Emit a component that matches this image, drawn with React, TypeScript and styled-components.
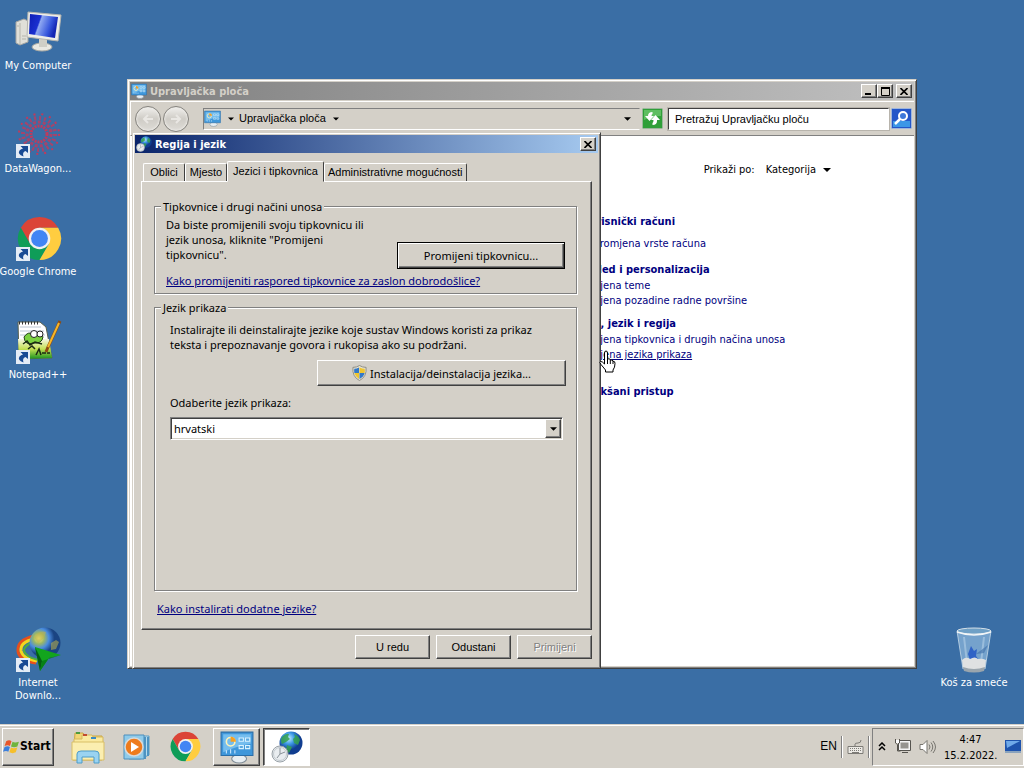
import React from 'react';
import styled, { createGlobalStyle, css } from 'styled-components';

const tahoma = '"DejaVu Sans Condensed", "DejaVu Sans", sans-serif';
const shell = '"Liberation Sans", Arial, sans-serif';
const segoe = '"Noto Sans", "Open Sans", sans-serif';
const face = '#d4d0c8';
const navy = '#000080';

const GlobalStyle = createGlobalStyle`
  * { box-sizing: border-box; }
  body { margin: 0; background: #3a6ea5; color: #000; font: 11px/15px ${tahoma}; }
  button, input, select { font: inherit; color: inherit; margin: 0; border-radius: 0; }
  p, h2 { margin: 0; }
  svg { display: block; flex: none; }
`;

const raised = css`
  background: ${face};
  border: 1px solid;
  border-color: #fff #404040 #404040 #fff;
  box-shadow: inset -1px -1px #808080;
`;

const Desktop = styled.div`
  display: flex;
  flex-direction: column;
  min-height: 100vh;
`;

const Workspace = styled.main`
  position: relative;
  flex: 1;
  min-height: 640px;
`;

const Shortcut = styled.button<{ $top: number; $right?: boolean }>`
  position: absolute;
  top: ${p => p.$top}px;
  ${p => (p.$right ? 'right: 10px;' : 'left: -2px;')}
  width: 80px;
  padding: 0;
  border: 0;
  background: none;
  color: #fff;
  display: flex;
  flex-direction: column;
  align-items: center;
  gap: 1px;
  line-height: 13px;
  text-align: center;
`;

const Glyph = styled.span`
  position: relative;
  display: grid;
  justify-items: end;
  align-items: start;
  width: 48px;
  height: 48px;
`;

const ShortcutBadge = styled.span`
  position: absolute;
  left: 2px;
  bottom: 3px;
`;

const WindowFrame = styled.section`
  position: absolute;
  display: flex;
  flex-direction: column;
  padding: 2px;
  background: ${face};
  border: 1px solid;
  border-color: ${face} #404040 #404040 ${face};
  box-shadow: inset 1px 1px #fff, inset -1px -1px #808080;
`;

const ControlPanel = styled(WindowFrame)`
  left: 127px;
  right: 107px;
  top: 79px;
  bottom: 55px;
`;

const RegionDialog = styled(WindowFrame)`
  left: 132px;
  width: 469px;
  top: 132px;
  bottom: 55px;
`;

const TitleBar = styled.header<{ $active?: boolean }>`
  display: flex;
  align-items: center;
  gap: 3px;
  height: 18px;
  padding: 0 2px 0 1px;
  color: ${p => (p.$active ? '#fff' : face)};
  background: ${p => p.$active
    ? 'linear-gradient(90deg, #0a246a, #a6caf0)'
    : 'linear-gradient(90deg, #808080, #c0c0c0)'};
`;

const Title = styled.h2`
  flex: 1;
  font-size: 11px;
  line-height: 15px;
`;

const CaptionGroup = styled.div`
  display: flex;
`;

const CaptionButton = styled.button`
  ${raised}
  display: grid;
  place-items: center;
  width: 16px;
  height: 14px;
  padding: 0;
`;

const Toolbar = styled.div`
  display: flex;
  align-items: center;
  height: 35px;
  margin-top: 1px;
  padding: 0 2px 0 4px;
  border-top: 1px solid #fff;
  border-left: 1px solid #fff;
  border-bottom: 1px solid #808080;
`;

const RoundButton = styled.button`
  display: grid;
  place-items: center;
  width: 26px;
  height: 26px;
  margin-right: 2px;
  padding: 0;
  border: 1px solid #85837e;
  border-radius: 50%;
  background: linear-gradient(#f0efec, #cfccc6 50%, #dedcd7);
  box-shadow: inset 0 0 2px 1px #eceae6;
`;

const AddressBar = styled.div`
  display: flex;
  align-items: center;
  gap: 5px;
  flex: 1;
  height: 22px;
  margin: 0 2px 0 12px;
  padding-right: 8px;
  border: 1px solid;
  border-color: #808080 ${face} #fff #808080;
  font-family: ${shell};
`;

const Crumb = styled.button`
  display: flex;
  align-items: center;
  gap: 7px;
  padding: 0;
  border: 0;
  background: none;
  &:last-child { margin-left: auto; }
`;

const SquareButton = styled.button`
  width: 21px;
  height: 22px;
  padding: 0;
  border: 0;
  background: none;
`;

const SearchInput = styled.input`
  width: 221px;
  height: 22px;
  margin: 0 2px 0 5px;
  padding: 0 6px;
  border: 1px solid;
  border-color: #404040 #fff #fff #404040;
  outline: 1px solid #b8b4ac;
  background: #fff;
  font-family: ${shell};
  &::placeholder { color: #000; opacity: 1; }
`;

const Content = styled.div`
  flex: 1;
  padding: 26px 83px 0 445px;
  background: #fff;
  overflow: hidden;
`;

const ViewBy = styled.div`
  display: flex;
  align-items: center;
  justify-content: flex-end;
  gap: 11px;
  margin-bottom: 37px;
`;

const DropButton = styled.button`
  display: flex;
  align-items: center;
  gap: 7px;
  padding: 0;
  border: 0;
  background: none;
`;

const Category = styled.section<{ $gap: number }>`
  display: flex;
  flex-direction: column;
  align-items: flex-start;
  margin-bottom: ${p => p.$gap}px;
  white-space: nowrap;
`;

const CategoryLink = styled.a`
  margin-left: 7px;
  color: ${navy};
  font-weight: bold;
  line-height: 16px;
  text-decoration: none;
`;

const TaskLink = styled.a<{ $hover?: boolean; $inset?: boolean }>`
  color: ${navy};
  text-decoration: ${p => (p.$hover ? 'underline' : 'none')};
  margin: ${p => (p.$inset ? '6px 0 2px 19px' : '0')};
`;

const DialogBody = styled.form`
  display: flex;
  flex-direction: column;
  flex: 1;
  padding: 8px 6px 7px;
  font-family: ${segoe};
`;

const TabList = styled.div`
  display: flex;
  align-items: flex-end;
  height: 20px;
  padding-left: 2px;
  font-family: ${shell};
`;

const Tab = styled.button<{ $selected?: boolean }>`
  position: relative;
  min-width: 42px;
  height: ${p => (p.$selected ? 21 : 18)}px;
  margin-bottom: ${p => (p.$selected ? -1 : 0)}px;
  padding: 0 ${p => (p.$selected ? 5 : 3)}px;
  white-space: nowrap;
  background: ${face};
  border: 1px solid;
  border-color: #fff #404040 ${face} #fff;
  border-bottom-width: ${p => (p.$selected ? 1 : 0)}px;
  border-radius: 2px 2px 0 0;
  z-index: ${p => (p.$selected ? 1 : 0)};
`;

const TabPanel = styled.div`
  display: flex;
  flex-direction: column;
  flex: 1;
  padding: 17px 14px 13px 12px;
  border: 1px solid;
  border-color: #fff #404040 #404040 #fff;
  box-shadow: inset -1px -1px #808080;
`;

const Group = styled.fieldset<{ $grow?: boolean }>`
  flex: ${p => (p.$grow ? 1 : 'none')};
  margin: 0 0 6px;
  padding: 0 11px 5px;
  border: 1px solid #808080;
  box-shadow: inset 1px 1px #fff, 1px 1px #fff;
`;

const Legend = styled.legend`
  margin-left: -5px;
  padding: 0 2px;
  background: ${face};
`;

const KeyboardRow = styled.div`
  display: flex;
  align-items: flex-end;
  justify-content: space-between;
  margin: 3px 0 4px;
`;

const KeyboardText = styled.p`
  width: 216px;
  margin-bottom: 7px;
`;

const TextLink = styled.a`
  color: ${navy};
  text-decoration: underline;
`;

const LanguageArea = styled.div`
  display: flex;
  flex-direction: column;
  align-items: stretch;
  padding: 7px 2px 0 4px;
`;

const PushButton = styled.button<{ $wide?: boolean; $isDefault?: boolean }>`
  ${raised}
  display: flex;
  align-items: center;
  justify-content: center;
  gap: 3px;
  flex: none;
  width: ${p => (p.$wide ? 249 : 75)}px;
  height: ${p => (p.$wide ? 26 : 24)}px;
  padding: 0;
  ${p => p.$wide && 'align-self: flex-end; margin: 8px -3px 9px 0;'}
  ${p => p.$isDefault && `
    width: 168px;
    height: 27px;
    border-color: #000;
    box-shadow: inset 1px 1px #fff, inset -1px -1px #404040, inset -2px -2px #808080;
  `}
  &:disabled {
    color: #808080;
    text-shadow: 1px 1px #fff;
  }
`;

const SelectBox = styled.div`
  position: relative;
  height: 23px;
  margin-top: 7px;
`;

const Select = styled.select`
  appearance: none;
  width: 100%;
  height: 100%;
  padding: 0 20px 0 3px;
  background: #fff;
  border: 1px solid;
  border-color: #808080 #fff #fff #808080;
  box-shadow: inset 1px 1px #404040, inset -1px -1px ${face};
`;

const SelectArrow = styled.span`
  ${raised}
  position: absolute;
  top: 2px;
  right: 2px;
  bottom: 2px;
  width: 16px;
  display: grid;
  place-items: center;
  pointer-events: none;
`;

const FootLink = styled(TextLink)`
  align-self: flex-start;
  margin: 4px 0 0 3px;
`;

const DialogButtons = styled.div`
  display: flex;
  justify-content: flex-end;
  gap: 6px;
  padding-top: 5px;
  font-family: ${shell};
`;

const Pointer = styled.span`
  position: absolute;
  left: 599px;
  top: 350px;
`;

const Taskbar = styled.footer`
  display: flex;
  align-items: center;
  height: 44px;
  padding-left: 2px;
  background: ${face};
  border-top: 1px solid ${face};
  box-shadow: inset 0 1px #fff;
`;

const StartButton = styled.button`
  ${raised}
  display: flex;
  align-items: center;
  gap: 0;
  width: 52px;
  height: 38px;
  margin-right: 9px;
  padding: 0;
  font-weight: bold;
  font-size: 12px;
`;

const Launcher = styled.button`
  display: grid;
  place-items: center;
  width: 49px;
  height: 38px;
  padding: 0;
  border: 0;
  background: none;
`;

const TaskButton = styled.button<{ $active?: boolean }>`
  ${raised}
  display: grid;
  place-items: center;
  width: 47px;
  height: 38px;
  margin-left: 3px;
  padding: 0;
  ${p => p.$active && `
    background: #fff;
    border-color: #404040 #fff #fff #404040;
    box-shadow: inset 1px 1px #808080;
  `}
`;

const LanguageBar = styled.div`
  display: flex;
  align-items: center;
  gap: 4px;
  margin-left: auto;
  height: 22px;
  font-family: ${shell};
  font-size: 12px;
`;

const Divider = styled.span`
  width: 2px;
  height: 22px;
  border-left: 1px solid #808080;
  border-right: 1px solid #fff;
`;

const Tray = styled.div`
  display: flex;
  align-items: center;
  gap: 8px;
  height: 38px;
  margin-left: 2px;
  padding: 0 2px 0 5px;
  border: 1px solid;
  border-color: #808080 #fff #fff #808080;
`;

const Clock = styled.time`
  width: 53px;
  padding-top: 2px;
  text-align: center;
  line-height: 16px;
  white-space: nowrap;
`;

const Down = ({ size = 7 }: { size?: number }) => (
  <svg width={size} height={4} viewBox="0 0 8 4" aria-hidden="true"><path d="M0 0h8L4 4z" /></svg>
);

const PanelIcon = ({ size = 16 }: { size?: number }) => (
  <svg width={size} height={size} viewBox="0 0 32 32">
    <ellipse cx="18" cy="27" rx="7" ry="4" fill="#e8eef2" stroke="#7f8b95" />
    <path d="M1 2h30v22H1z" fill="#3f97da" stroke="#2a6ea8" />
    <path d="M3 4h26v9q-13 2-26 8z" fill="#74bdee" />
    <circle cx="10" cy="11" r="4" fill="none" stroke="#fff3b8" strokeWidth="1.500" />
    <path d="M10 6v5h5a5 5 0 0 0-5-5" fill="#f5a023" />
    <path d="M18 7.500h4v3h-4zM24 7.500h4v3h-4zM18 14.500h4v3h-4zM24 14.500h4v3h-4z" fill="#5aa9e0" stroke="#d9f2ff" />
    <path d="M6 19v3M10 18v4M14 19v3" stroke="#cfeaff" />
  </svg>
);

const GlobeIcon = ({ size = 16 }: { size?: number }) => (
  <svg width={size} height={size} viewBox="0 0 32 32">
    <defs>
      <radialGradient id="sea" cx=".4" cy=".3"><stop stopColor="#c4efff" /><stop offset=".5" stopColor="#3c98e6" /><stop offset="1" stopColor="#103d90" /></radialGradient>
    </defs>
    <circle cx="20" cy="12" r="11.500" fill="url(#sea)" />
    <path d="M11 6q4-4 7-3l-1 3 2 2-4 3-4 2q-2-4 0-7M23 3q5 2 6 6l-2 5-4-2-1-4 2-2zM16 14l5 2-3 6-3-3z" fill="#35a04c" opacity=".85" />
    <circle cx="9" cy="23" r="8" fill="#e9edf0" stroke="#9aa2a8" />
    <circle cx="9" cy="23" r="6.500" fill="none" stroke="#c3cacf" />
    <path d="M9 17v6l5-2M9 23l-3 4" fill="none" stroke="#8b939a" />
  </svg>
);

const ChromeIcon = ({ size }: { size: number }) => (
  <svg width={size} height={size} viewBox="0 0 48 48">
    <path d="M4.080 12.500A23 23 0 0 1 43.920 12.500H24L14.040 29.750z" fill="#db4437" />
    <path d="M4.080 12.500A23 23 0 0 0 24 47l9.960-17.250H14.040z" fill="#0f9d58" />
    <path d="M24 12.500h19.920A23 23 0 0 1 24 47l9.960-17.250z" fill="#ffcd40" />
    <circle cx="24" cy="24" r="11.500" fill="#f1f1f1" />
    <circle cx="24" cy="24" r="9" fill="#4285f4" />
  </svg>
);

const ComputerIcon = () => (
  <svg width="48" height="48" viewBox="0 0 48 48">
    <defs>
      <linearGradient id="screen" x2="1" y2=".3"><stop stopColor="#0d1db4" /><stop offset=".4" stopColor="#1a30d0" /><stop offset=".45" stopColor="#8fa8f2" /><stop offset=".8" stopColor="#3656dc" /><stop offset="1" stopColor="#1426b4" /></linearGradient>
    </defs>
    <path d="M2 12l8-3 4 2v21l-8 3-4-2z" fill="#e0dfd8" stroke="#a5a6a2" />
    <path d="M6 13v21M3 16h2M8 26h4M8 29h4" stroke="#b5b5ac" />
    <ellipse cx="28" cy="37" rx="10" ry="4" fill="#e9e8e2" stroke="#a9a9a2" />
    <path d="M25 28h8v9h-8z" fill="#cfcec6" />
    <path d="M14 2l33 3-3 26-31-4z" fill="#eeeee9" stroke="#b5b5b0" />
    <path d="M16 4l28 3-3 21-26-4z" fill="url(#screen)" />
  </svg>
);

const WagonIcon = () => (
  <svg width="48" height="48" viewBox="0 0 48 48" fill="none" stroke="#c03a5c">
    <circle cx="25" cy="21" r="8" strokeWidth="3" strokeDasharray="2 1" />
    <circle cx="25" cy="21" r="12" strokeWidth="3" strokeDasharray="3 2" opacity=".8" />
    <circle cx="25" cy="21" r="16" strokeWidth="4" strokeDasharray="2 3" opacity=".8" />
    <circle cx="25" cy="21" r="20" strokeWidth="2" strokeDasharray="2 6" />
  </svg>
);

const NotepadIcon = () => (
  <svg width="48" height="48" viewBox="0 0 48 48">
    <defs><linearGradient id="grass" x2="0" y2="1"><stop stopColor="#f4f7e2" /><stop offset=".5" stopColor="#c4e052" /><stop offset="1" stopColor="#18921f" /></linearGradient></defs>
    <path d="M4 3h22l6 5 6 31-33 1z" fill="#fff" stroke="#59614f" />
    <path d="M6 8h21M6 12h24M6 16h25" stroke="#bcc7d3" />
    <path d="M4 20h31l3 19-33 1z" fill="url(#grass)" />
    <path d="M5 4h20" stroke="#333" strokeWidth="3" strokeDasharray="1 2" />
    <path d="M10 18q4-6 9-3 8-3 10 3-1 7-10 6-8 3-9-6" fill="#7bd13f" stroke="#23411a" />
    <circle cx="20" cy="15" r="3.500" fill="#fff" stroke="#222" /><circle cx="26" cy="15" r="3" fill="#fff" stroke="#222" />
    <path d="M9 25l4-3 3 4 5-3 7 2M14 30l4-3 3 3M22 36l3-6 2 6M28 34h4M33 34h3" fill="none" stroke="#1b2a12" strokeWidth="1.500" />
    <path d="M46 2 34 28l-2 5" fill="none" stroke="#8e4c12" strokeWidth="3" /><path d="M45 4 34 28" stroke="#f5b72b" strokeWidth="2" />
  </svg>
);

const DownloadIcon = () => (
  <svg width="48" height="48" viewBox="0 0 48 48">
    <defs><radialGradient id="earth" cx=".3" cy=".35"><stop stopColor="#fff27b" /><stop offset=".35" stopColor="#9cb764" /><stop offset=".65" stopColor="#4a8de0" /><stop offset="1" stopColor="#1a4482" /></radialGradient></defs>
    <path d="M20 9Q3 13 4 24q1 9 18 12" fill="none" stroke="#e5501c" strokeWidth="3" />
    <path d="M20 12Q6 15 7 24q2 8 16 10" fill="none" stroke="#f4d71e" strokeWidth="3" />
    <path d="M20 15Q10 18 10 24q2 6 14 9" fill="none" stroke="#4fae3c" strokeWidth="2" />
    <circle cx="31" cy="16" r="15.500" fill="url(#earth)" />
    <path d="M20 10q6-7 12-5l-2 6-6 5M37 16l5-3 3 2-3 7-5 1z" fill="#c0b34b" opacity=".55" />
    <path d="M21 20l26 8-12 3-9 13z" fill="#12a51d" /><path d="M21 20l7 14-2 10z" fill="#055d13" /><path d="M28 34l19-6-12 3-9 13z" fill="#078016" />
  </svg>
);

const BinIcon = () => (
  <svg width="48" height="48" viewBox="0 0 48 48">
    <path d="M7 4l6 38q11 5 22 0l6-38z" fill="#9cc4e6" opacity=".6" />
    <path d="M7 4l6 38M41 4l-6 38" stroke="#c8dcea" opacity=".8" />
    <path d="M14 10l3 26M34 10l-3 26" stroke="#d3e7f5" opacity=".4" strokeWidth="2" />
    <path d="M18 27l3-8 3 5 3-2-1 7 3 4h-9z" fill="#2458c4" opacity=".85" />
    <path d="M26 27l12-9-4 8z" fill="#3d6ea8" opacity=".6" />
    <path d="M12 33q4-4 8-1 5-3 8 0 4-1 8 1l-1 8q-11 4-22 0z" fill="#dfe1e2" />
    <path d="M13 40q11 4 22 0l-1 4q-10 3-20 0z" fill="#9aa5ad" />
    <ellipse cx="24" cy="4" rx="17" ry="3" fill="#6fa0c6" stroke="#d5e0e8" />
    <path d="M7 5q17 6 34 0" fill="none" stroke="#f1f5f7" strokeWidth="1.500" />
  </svg>
);

const Arrow = () => (
  <ShortcutBadge>
    <svg width="14" height="14" viewBox="0 0 14 14"><path d="M0 0h14v14H0z" fill="#e4ecf6" /><path d="M4.500 2H12v7L9.500 7Q6 8 7.500 12.500 1 10 3.500 6.500 5 5 7 4.500z" fill="#184a94" /></svg>
  </ShortcutBadge>
);

const Close = () => <svg width="8" height="7" viewBox="0 0 8 7"><path d="M.5 0 7.500 7M7.500 0 .5 7" stroke="#000" strokeWidth="1.600" /></svg>;

const shortcuts = [
  { name: 'My Computer', top: 10, icon: <ComputerIcon /> },
  { name: 'DataWagon...', top: 113, icon: <WagonIcon />, link: true },
  { name: 'Google Chrome', top: 216, icon: <ChromeIcon size={45} />, link: true },
  { name: 'Notepad++', top: 319, icon: <NotepadIcon />, link: true },
  { name: 'Internet Downlo...', top: 627, icon: <DownloadIcon />, link: true },
];

export default function App() {
  return (
    <Desktop>
      <GlobalStyle />
      <Workspace>
        {shortcuts.map(s => (
          <Shortcut key={s.name} $top={s.top}>
            <Glyph>{s.icon}{s.link && <Arrow />}</Glyph>
            {s.name}
          </Shortcut>
        ))}
        <Shortcut $top={627} $right><Glyph><BinIcon /></Glyph>Koš za smeće</Shortcut>

        <ControlPanel>
          <TitleBar>
            <PanelIcon />
            <Title>Upravljačka ploča</Title>
            <CaptionGroup>
              <CaptionButton aria-label="Minimiziraj"><svg width="8" height="8"><path d="M0 6h6v2H0z" /></svg></CaptionButton>
              <CaptionButton aria-label="Maksimiziraj"><svg width="9" height="9"><path d="M.5 1v7.500h8V1M0 1h9" fill="none" stroke="#000" /><path d="M0 0h9v2H0z" /></svg></CaptionButton>
            </CaptionGroup>
            <CaptionButton aria-label="Zatvori"><Close /></CaptionButton>
          </TitleBar>
          <Toolbar>
            <RoundButton aria-label="Natrag"><svg width="12" height="10"><path d="M11 5H2M6 1 2 5l4 4" fill="none" stroke="#e9e7e3" strokeWidth="2" /></svg></RoundButton>
            <RoundButton aria-label="Naprijed"><svg width="12" height="10"><path d="M1 5h9M6 1l4 4-4 4" fill="none" stroke="#e9e7e3" strokeWidth="2" /></svg></RoundButton>
            <AddressBar>
              <Crumb aria-label="Mjesta"><PanelIcon size={17} /><Down size={6} /></Crumb>
              <Crumb>Upravljačka ploča<Down size={6} /></Crumb>
              <Crumb aria-label="Prethodna mjesta"><Down /></Crumb>
            </AddressBar>
            <SquareButton aria-label="Osvježi">
              <svg width="21" height="21" viewBox="0 0 21 21"><rect x=".5" y=".5" width="20" height="20" rx="1" fill="#2f9f38" stroke="#9bb79b" /><path d="M2 2h17v6Q10 8 2 12z" fill="#7fd37c" opacity=".6" /><path d="M10.500 4Q6 4 6 8H3l4.500 5L12 8H9.500q0-2 1-2zM10.500 17q4.500 0 4.500-4V12h3l-4.500-5L9 12h2.500q0 3-1 3z" fill="#fff" /></svg>
            </SquareButton>
            <SearchInput aria-label="Pretražuj" placeholder="Pretražuj Upravljačku ploču" />
            <SquareButton aria-label="Traži">
              <svg width="21" height="21" viewBox="0 0 21 21"><rect x=".5" y=".5" width="20" height="20" rx="1" fill="#2456c8" stroke="#9fb6dc" /><path d="M2 13h17v6H2z" fill="#42a6ee" opacity=".8" /><circle cx="12" cy="8" r="4" fill="#3d78da" stroke="#fff" strokeWidth="2" /><path d="M9 11l-5 5" stroke="#fff" strokeWidth="2.500" /></svg>
            </SquareButton>
          </Toolbar>
          <Content>
            <ViewBy>Prikaži po: <DropButton>Kategorija <Down size={8} /></DropButton></ViewBy>
            <Category $gap={9}>
              <CategoryLink href="#racuni">Korisnički računi</CategoryLink>
              <TaskLink href="#vrsta" $inset>Promjena vrste računa</TaskLink>
            </Category>
            <Category $gap={8}>
              <CategoryLink href="#izgled">Izgled i personalizacija</CategoryLink>
              <TaskLink href="#tema">Promjena teme</TaskLink>
              <TaskLink href="#pozadina">Promjena pozadine radne površine</TaskLink>
            </Category>
            <Category $gap={22}>
              <CategoryLink href="#sat">Sat, jezik i regija</CategoryLink>
              <TaskLink href="#tipkovnica">Promjena tipkovnica i drugih načina unosa</TaskLink>
              <TaskLink href="#jezik" $hover>Promjena jezika prikaza</TaskLink>
            </Category>
            <Category $gap={0}><CategoryLink href="#pristup">Olakšani pristup</CategoryLink></Category>
          </Content>
        </ControlPanel>

        <RegionDialog role="dialog" aria-labelledby="region-title">
          <TitleBar $active>
            <GlobeIcon />
            <Title id="region-title">Regija i jezik</Title>
            <CaptionButton aria-label="Zatvori"><Close /></CaptionButton>
          </TitleBar>
          <DialogBody onSubmit={e => e.preventDefault()}>
            <TabList role="tablist">
              <Tab type="button" role="tab">Oblici</Tab>
              <Tab type="button" role="tab">Mjesto</Tab>
              <Tab type="button" role="tab" aria-selected $selected>Jezici i tipkovnica</Tab>
              <Tab type="button" role="tab">Administrativne mogućnosti</Tab>
            </TabList>
            <TabPanel role="tabpanel">
              <Group>
                <Legend>Tipkovnice i drugi načini unosa</Legend>
                <KeyboardRow>
                  <KeyboardText>Da biste promijenili svoju tipkovnicu ili jezik unosa, kliknite "Promijeni tipkovnicu".</KeyboardText>
                  <PushButton type="button" $isDefault>Promijeni tipkovnicu...</PushButton>
                </KeyboardRow>
                <TextLink href="#raspored">Kako promijeniti raspored tipkovnice za zaslon dobrodošlice?</TextLink>
              </Group>
              <Group $grow>
                <Legend>Jezik prikaza</Legend>
                <LanguageArea>
                  <p>Instalirajte ili deinstalirajte jezike koje sustav Windows koristi za prikaz teksta i prepoznavanje govora i rukopisa ako su podržani.</p>
                  <PushButton type="button" $wide>
                    <svg width="15" height="16" viewBox="0 0 16 16"><path d="M8 0q3 2 7 2 1 10-7 14Q0 12 1 2q4 0 7-2" fill="#e6e2d3" stroke="#8b8b82" /><path d="M7.500 2v6h-5Q2 5 2.500 3.500 5 3.500 7.500 2M8 8h5.500q-1 4-5.500 6.500z" fill="#3279c9" /><path d="M8 2q3 1.500 5.500 1.500Q14 6 13.500 8H8zM2.500 8h5v6.500Q3.500 12 2.500 8" fill="#efc52f" /></svg>
                    Instalacija/deinstalacija jezika...
                  </PushButton>
                  <label htmlFor="display-language">Odaberite jezik prikaza:</label>
                  <SelectBox>
                    <Select id="display-language" defaultValue="hr"><option value="hr">hrvatski</option></Select>
                    <SelectArrow><Down /></SelectArrow>
                  </SelectBox>
                </LanguageArea>
              </Group>
              <FootLink href="#dodatni">Kako instalirati dodatne jezike?</FootLink>
            </TabPanel>
            <DialogButtons>
              <PushButton type="submit">U redu</PushButton>
              <PushButton type="button">Odustani</PushButton>
              <PushButton type="button" disabled>Primijeni</PushButton>
            </DialogButtons>
          </DialogBody>
        </RegionDialog>

        <Pointer>
          <svg width="17" height="24" viewBox="0 0 17 24"><path d="M5.500 13V3q0-2 1.500-2t1.500 2v6q2.500-1 2.800 1 2.400-.6 2.700 1.200 2.300 0 2 2.300 0 4-2 6.500v2H6.500v-2L2 14.500Q0 12 1.500 11.500T5.500 14z" fill="#fff" stroke="#000" /><path d="M8.500 9v5M11.300 10v4M14 11v3" stroke="#000" /></svg>
        </Pointer>
      </Workspace>

      <Taskbar>
        <StartButton>
          <svg width="17" height="17" viewBox="0 0 16 16"><path d="M3 3q3-2 5 0L6.500 7.500q-2-1.500-5 0z" fill="#e8562a" /><path d="M9 3.500q2 1.500 6 0L13.500 8q-3 1.500-6 0z" fill="#6fb43c" /><path d="M1.500 8.500q3-1.500 5 0L5 13q-2-1.500-5 0z" fill="#3c7fdc" /><path d="M7.500 9q2 1.500 6 0L12 13.500q-3 1.500-6 0z" fill="#f6bf2a" /></svg>
          Start
        </StartButton>
        <Launcher aria-label="Windows Explorer">
          <svg width="34" height="34" viewBox="0 0 34 34"><path d="M4 3h8l2 3h17v24H2z" fill="#f2d675" stroke="#c9a545" /><path d="M11 5h10l1 2h10v21H3V9h8z" fill="#faeaa0" stroke="#d5b85f" /><path d="M1 12h32v18H1z" fill="#fbeeb0" stroke="#d9bf66" /><path d="M5 2h4v2H5z" fill="#4d9b3e" /><path d="M12 4h4v2h-4z" fill="#c34a2f" /><path d="M20 7h5v2h-5z" fill="#3b8bc4" /><path d="M6 33v-9q0-3 4-3h14q4 0 4 3v9h-5v-6H11v6z" fill="#9ad3f1" stroke="#4d9cca" /></svg>
        </Launcher>
        <Launcher aria-label="Windows Media Player">
          <svg width="30" height="30" viewBox="0 0 30 30"><path d="M7 4h20v19l-9 4H7z" fill="#b5dcef" stroke="#5b9cc4" /><path d="M23 5v22M26 5v19" stroke="#4e94c2" strokeWidth="2" /><path d="M2 3h20v24H2z" fill="#8fcbea" stroke="#4d8fbd" /><circle cx="12" cy="15" r="9" fill="#ee7b1c" stroke="#d9d9d9" strokeWidth="1.500" /><path d="M9 10v10l8-5z" fill="#fff" /></svg>
        </Launcher>
        <Launcher aria-label="Google Chrome"><ChromeIcon size={31} /></Launcher>
        <TaskButton aria-label="Upravljačka ploča"><PanelIcon size={34} /></TaskButton>
        <TaskButton aria-label="Regija i jezik" $active><GlobeIcon size={32} /></TaskButton>
        <LanguageBar>
          EN
          <Divider />
          <svg width="17" height="16" viewBox="0 0 17 16" fill="none" stroke="#7d7b76"><path d="M1 7.500h15v7H1z" fill="#eceae5" /><path d="M3 9.500h11M3 11.500h11" strokeDasharray="1 1" /><path d="M5 13.500h7M8 7V5q0-1 3-1t3-3" /></svg>
          <Divider />
        </LanguageBar>
        <Tray>
          <svg width="8" height="9" viewBox="-1 0 8 9"><path d="M0 4l3-3 3 3M0 8l3-3 3 3" fill="none" stroke="#000" strokeWidth="1.500" /></svg>
          <svg width="17" height="17" viewBox="0 0 17 17"><path d="M5.500 3.500h10v8h-10z" fill="#96948f" stroke="#f5f5f5" strokeWidth="2" /><path d="M4.500 2.500h12v10h-12zM8 14.500h6M1.500 1v4q2 3 4 0V1M3.500 7v6h3" fill="none" stroke="#56544f" /><path d="M2 2h3v3H2z" fill="#fff" /></svg>
          <svg width="17" height="16" viewBox="0 0 17 16" fill="none" stroke="#77756f"><path d="M1 5.500h3l4-4v13l-4-4H1z" fill="#fff" /><path d="M10 5.500q2 2.500 0 5M12 3.500q3.500 4.500 0 9M14 2q5 6 0 12" /></svg>
          <Clock>4:47<br />15.2.2022.</Clock>
          <svg width="16" height="13" viewBox="0 0 16 13"><path d="M0 0h16v11H0z" fill="#1e53ad" /><path d="M1 1h14L2 8z" fill="#6fa9e9" /><path d="M0 11h16v2H0z" fill="#8aa3bd" /></svg>
        </Tray>
      </Taskbar>
    </Desktop>
  );
}
